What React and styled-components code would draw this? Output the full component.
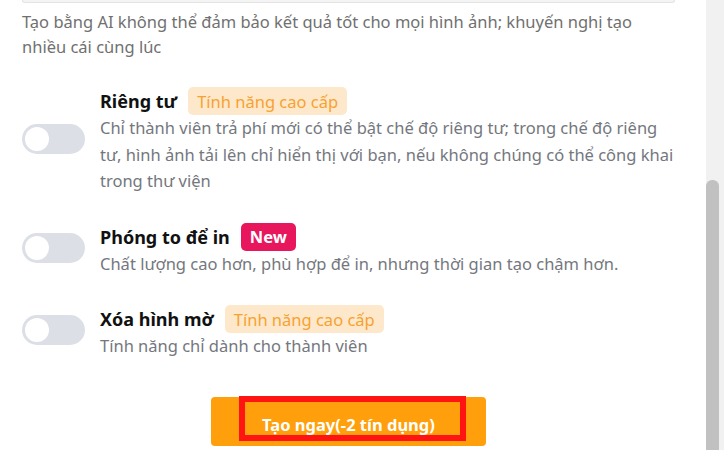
import React from "react";
import styled, { createGlobalStyle } from "styled-components";

const GlobalStyle = createGlobalStyle`
  html, body {
    margin: 0;
    padding: 0;
    background: #fff;
  }
  body {
    font-family: "Noto Sans", "Open Sans", sans-serif;
  }
`;

const Page = styled.div`
  display: flex;
  width: 724px;
  height: 450px;
  overflow: hidden;
  background: #fff;
`;

const Main = styled.div`
  flex: 1;
  display: flex;
  flex-direction: column;
  padding: 0 26px 0 22px;
`;

const TopBox = styled.div`
  height: 2px;
  margin-right: 5px;
  border: 1px solid #e3e3e3;
  border-top: none;
  border-radius: 0 0 4px 4px;
  background: #f4f4f4;
`;

const Notice = styled.p`
  margin: 6px 0 0;
  font-size: 16.5px;
  line-height: 25px;
  color: #707070;
`;

const OptionList = styled.div`
  display: flex;
  flex-direction: column;
  gap: 28px;
  margin-top: 28px;
`;

const Option = styled.div`
  display: flex;
  align-items: center;
  gap: 15px;
`;

const Switch = styled.div`
  flex: none;
  width: 63px;
  height: 30px;
  border-radius: 15px;
  background: #dcdfe6;
  position: relative;
  margin-top: -4px;

  &::after {
    content: "";
    position: absolute;
    top: 3px;
    left: 3px;
    width: 24px;
    height: 24px;
    border-radius: 50%;
    background: #fff;
  }
`;

const Body = styled.div`
  display: flex;
  flex-direction: column;
  min-width: 0;
`;

const TitleRow = styled.div`
  display: flex;
  align-items: center;
  gap: 11px;
  height: 28px;
`;

const Title = styled.span`
  font-size: 18px;
  font-weight: 700;
  color: #111;
`;

const Badge = styled.span`
  display: inline-flex;
  align-items: center;
  height: 28px;
  padding: 0 9px;
  border-radius: 5px;
  font-size: 16.5px;
  background: ${(p) => (p.$variant === "new" ? "#e8175d" : "#fee8cb")};
  color: ${(p) => (p.$variant === "new" ? "#fff" : "#f7a230")};
  font-weight: ${(p) => (p.$variant === "new" ? 700 : 400)};
`;

const Desc = styled.p`
  margin: 0;
  font-size: 16.5px;
  line-height: 26.5px;
  color: #74777e;
`;

const ButtonWrap = styled.div`
  display: flex;
  justify-content: center;
  margin: 37px 5px 0 0;
`;

const CreateButton = styled.button`
  position: relative;
  width: 275px;
  height: 49px;
  border: none;
  border-radius: 4px;
  background: #ff9f0b;
  color: #fff;
  font-family: inherit;
  font-size: 16.5px;
  font-weight: 700;
  padding: 6px 0 0;
  cursor: pointer;
`;

const Highlight = styled.span`
  position: absolute;
  top: -1px;
  left: 28px;
  width: 227px;
  height: 45px;
  box-sizing: border-box;
  border: 6px solid #ff1414;
  pointer-events: none;
`;

const ScrollTrack = styled.div`
  flex: none;
  width: 18px;
  background: #f1f1f1;
  display: flex;
  flex-direction: column;
  padding-top: 180px;
  box-sizing: border-box;
`;

const ScrollThumb = styled.div`
  flex: 1;
  width: 13px;
  background: #c1c1c1;
  border-radius: 6px 6px 0 0;
`;

const options = [
  {
    title: "Riêng tư",
    badge: "Tính năng cao cấp",
    desc: "Chỉ thành viên trả phí mới có thể bật chế độ riêng tư; trong chế độ riêng tư, hình ảnh tải lên chỉ hiển thị với bạn, nếu không chúng có thể công khai trong thư viện",
  },
  {
    title: "Phóng to để in",
    badge: "New",
    variant: "new",
    desc: "Chất lượng cao hơn, phù hợp để in, nhưng thời gian tạo chậm hơn.",
  },
  {
    title: "Xóa hình mờ",
    badge: "Tính năng cao cấp",
    desc: "Tính năng chỉ dành cho thành viên",
  },
];

export default function App() {
  return (
    <Page>
      <GlobalStyle />
      <Main>
        <TopBox />
        <Notice>
          Tạo bằng AI không thể đảm bảo kết quả tốt cho mọi hình ảnh; khuyến
          nghị tạo nhiều cái cùng lúc
        </Notice>
        <OptionList>
          {options.map((o) => (
            <Option key={o.title}>
              <Switch />
              <Body>
                <TitleRow>
                  <Title>{o.title}</Title>
                  <Badge $variant={o.variant}>{o.badge}</Badge>
                </TitleRow>
                <Desc>{o.desc}</Desc>
              </Body>
            </Option>
          ))}
        </OptionList>
        <ButtonWrap>
          <CreateButton>
            <Highlight />
            Tạo ngay(-2 tín dụng)
          </CreateButton>
        </ButtonWrap>
      </Main>
      <ScrollTrack>
        <ScrollThumb />
      </ScrollTrack>
    </Page>
  );
}
